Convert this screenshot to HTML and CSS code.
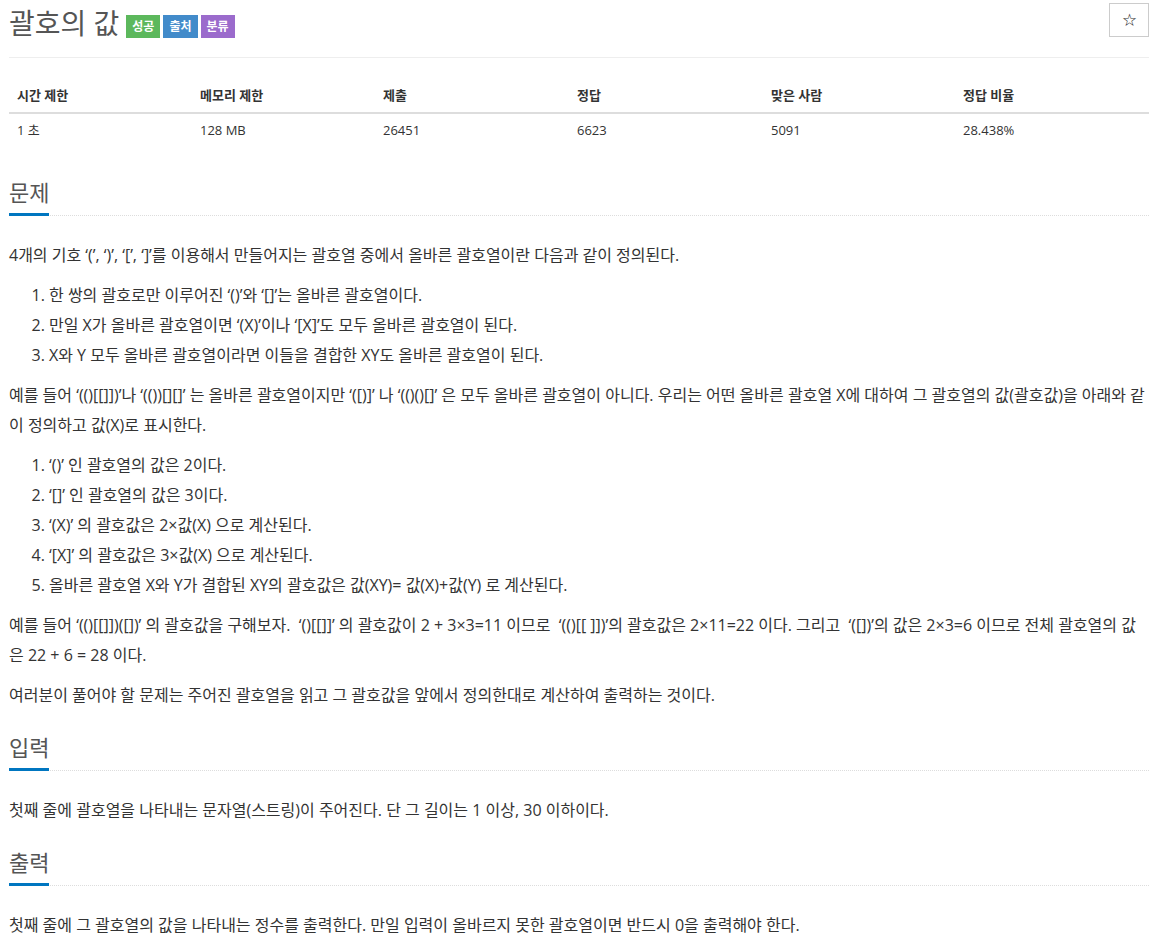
FILE: index.html
```html
<!DOCTYPE html>
<html lang="ko">
<head>
    <meta charset="UTF-8">
    <title>괄호의 값</title>
    <link rel="stylesheet" href="styles.css">
</head>
<body>
    <div class="container">
        <div class="page-header">
            <h1>
                <span class="title">괄호의 값</span>
                <span class="label label-success">성공</span>
                <span class="label label-primary">출처</span>
                <span class="label label-purple">분류</span>
            </h1>
            <button class="star-btn">☆</button>
        </div>

        <table class="info-table">
            <thead>
                <tr>
                    <th>시간 제한</th>
                    <th>메모리 제한</th>
                    <th>제출</th>
                    <th>정답</th>
                    <th>맞은 사람</th>
                    <th>정답 비율</th>
                </tr>
            </thead>
            <tbody>
                <tr>
                    <td>1 초</td>
                    <td>128 MB</td>
                    <td>26451</td>
                    <td>6623</td>
                    <td>5091</td>
                    <td>28.438%</td>
                </tr>
            </tbody>
        </table>

        <section class="problem-section">
            <div class="headline"><h2>문제</h2></div>
            <div class="problem-text">
                <p>4개의 기호 ‘(’, ‘)’, ‘[’, ‘]’를 이용해서 만들어지는 괄호열 중에서 올바른 괄호열이란 다음과 같이 정의된다.</p>
                <ol>
                    <li>한 쌍의 괄호로만 이루어진 ‘()’와 ‘[]’는 올바른 괄호열이다.</li>
                    <li>만일 X가 올바른 괄호열이면 ‘(X)’이나 ‘[X]’도 모두 올바른 괄호열이 된다.</li>
                    <li>X와 Y 모두 올바른 괄호열이라면 이들을 결합한 XY도 올바른 괄호열이 된다.</li>
                </ol>
                <p>예를 들어 ‘(()[[]])’나 ‘(())[][]’ 는 올바른 괄호열이지만 ‘([)]’ 나 ‘(()()[]’ 은 모두 올바른 괄호열이 아니다. 우리는 어떤 올바른 괄호열 X에 대하여 그 괄호열의 값(괄호값)을 아래와 같이 정의하고 값(X)로 표시한다.</p>
                <ol>
                    <li>‘()’ 인 괄호열의 값은 2이다.</li>
                    <li>‘[]’ 인 괄호열의 값은 3이다.</li>
                    <li>‘(X)’ 의 괄호값은 2×값(X) 으로 계산된다.</li>
                    <li>‘[X]’ 의 괄호값은 3×값(X) 으로 계산된다.</li>
                    <li>올바른 괄호열 X와 Y가 결합된 XY의 괄호값은 값(XY)= 값(X)+값(Y) 로 계산된다.</li>
                </ol>
                <p>예를 들어 ‘(()[[]])([])’ 의 괄호값을 구해보자.&nbsp; ‘()[[]]’ 의 괄호값이 2 + 3×3=11 이므로&nbsp; ‘(()[[ ]])’의 괄호값은 2×11=22 이다. 그리고&nbsp; ‘([])’의 값은 2×3=6 이므로 전체 괄호열의 값은 22 + 6 = 28 이다.</p>
                <p>여러분이 풀어야 할 문제는 주어진 괄호열을 읽고 그 괄호값을 앞에서 정의한대로 계산하여 출력하는 것이다.</p>
            </div>
        </section>

        <section class="problem-section">
            <div class="headline"><h2>입력</h2></div>
            <div class="problem-text">
                <p>첫째 줄에 괄호열을 나타내는 문자열(스트링)이 주어진다. 단 그 길이는 1 이상, 30 이하이다.</p>
            </div>
        </section>

        <section class="problem-section">
            <div class="headline"><h2>출력</h2></div>
            <div class="problem-text">
                <p>첫째 줄에 그 괄호열의 값을 나타내는 정수를 출력한다. 만일 입력이 올바르지 못한 괄호열이면 반드시 0을 출력해야 한다.</p>
            </div>
        </section>
    </div>
</body>
</html>
```

FILE: styles.css
```css
body {
    font-family: 'Open Sans', 'Noto Sans CJK KR', sans-serif;
    color: #333;
    background-color: #fff;
    margin: 0;
    padding: 0;
}

.container {
    padding: 0 8px 0 9px;
}

.page-header {
    display: flex;
    justify-content: space-between;
    align-items: flex-start;
    padding-top: 3px;
    padding-bottom: 14px;
    border-bottom: 1px solid #eee;
}

h1 {
    margin: 0;
    display: flex;
    align-items: center;
    font-weight: normal;
    height: 40px;
}

.title {
    font-size: 28px;
    color: #555;
    margin-right: 7px;
    line-height: 40px;
}

.label {
    display: inline-block;
    font-size: 12px;
    font-weight: bold;
    color: #fff;
    padding: 0 6px;
    height: 23px;
    line-height: 23px;
    margin-right: 3px;
    margin-top: 6px;
}

.label-success {
    background-color: #5cb85c;
}

.label-primary {
    background-color: #428bca;
}

.label-purple {
    background-color: #9b6bcc;
}

.star-btn {
    width: 40px;
    height: 34px;
    background-color: #fff;
    border: 1px solid #ccc;
    font-size: 15px;
    color: #333;
    cursor: pointer;
    padding: 0;
}

.info-table {
    width: 100%;
    border-collapse: collapse;
    table-layout: fixed;
    margin-top: 20px;
    margin-bottom: 19px;
    font-size: 13px;
}

.info-table th {
    text-align: left;
    font-weight: bold;
    padding: 8px;
    line-height: 18px;
    border-bottom: 2px solid #ddd;
}

.info-table th:nth-child(1),
.info-table th:nth-child(2) {
    width: 167px;
}

.info-table th:nth-child(3),
.info-table th:nth-child(4) {
    width: 178px;
}

.info-table th:nth-child(5) {
    width: 176px;
}

.info-table td {
    padding: 7px 8px 8px;
    line-height: 19px;
}

.problem-section {
    margin-top: 12px;
}

.headline {
    border-bottom: 1px dotted #ddd;
    margin-bottom: 24px;
}

.headline h2 {
    display: inline-block;
    margin: 0 0 -1px;
    padding: 11px 0 6px;
    font-size: 22px;
    font-weight: normal;
    color: #555;
    border-bottom: 3px solid #0076c0;
    line-height: 29px;
}

.problem-text {
    font-size: 16px;
    line-height: 30px;
}

.problem-text p {
    margin: 0 0 10px;
}

.problem-text ol {
    margin: 0 0 10px;
    padding-left: 40px;
}
```
